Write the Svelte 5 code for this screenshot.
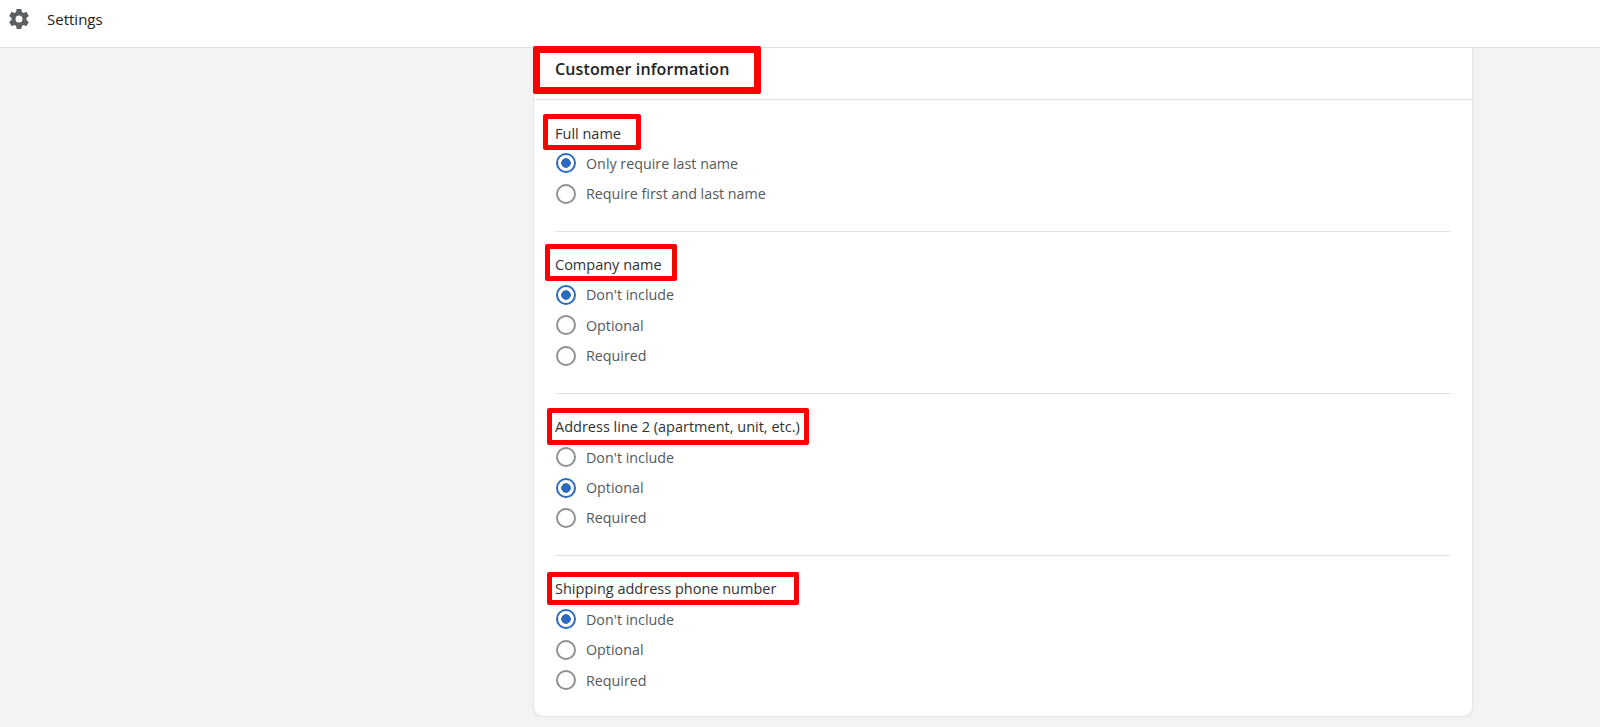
<script>
  const sections = [
    { key: "full", label: "Full name", options: ["Only require last name", "Require first and last name"], selected: 0 },
    { key: "company", label: "Company name", options: ["Don't include", "Optional", "Required"], selected: 0 },
    { key: "address", label: "Address line 2 (apartment, unit, etc.)", options: ["Don't include", "Optional", "Required"], selected: 1 },
    { key: "phone", label: "Shipping address phone number", options: ["Don't include", "Optional", "Required"], selected: 0 },
  ];
</script>

<header class="topbar">
  <svg class="gear" viewBox="0 0 24 24" aria-hidden="true">
    <path d="M19.43 12.98c.04-.32.07-.64.07-.98s-.03-.66-.07-.98l2.11-1.65c.19-.15.24-.42.12-.64l-2-3.46c-.12-.22-.39-.3-.61-.22l-2.49 1c-.52-.4-1.08-.73-1.69-.98l-.38-2.65A.49.49 0 0 0 14 2h-4c-.25 0-.46.18-.49.42l-.38 2.65c-.61.25-1.17.59-1.69.98l-2.49-1c-.23-.09-.49 0-.61.22l-2 3.46c-.13.22-.07.49.12.64l2.11 1.65c-.04.32-.07.65-.07.98s.03.66.07.98l-2.11 1.65c-.19.15-.24.42-.12.64l2 3.46c.12.22.39.3.61.22l2.49-1c.52.4 1.08.73 1.69.98l.38 2.65c.03.24.24.42.49.42h4c.25 0 .46-.18.49-.42l.38-2.65c.61-.25 1.17-.59 1.69-.98l2.49 1c.23.09.49 0 .61-.22l2-3.46c.12-.22.07-.49-.12-.64l-2.11-1.65zM12 15.5a3.5 3.5 0 1 1 0-7 3.5 3.5 0 0 1 0 7z"/>
  </svg>
  <span class="title">Settings</span>
</header>

<main class="page">
  <section class="card">
    <div class="card-head">
      <h2>Customer information</h2>
      <span class="mark mark-head"></span>
    </div>
    <div class="card-body">
      {#each sections as s}
        <div class="group">
          <div class="label">
            {s.label}
            <span class="mark mark-{s.key}"></span>
          </div>
          {#each s.options as opt, i}
            <label class="option">
              <span class="radio" class:on={i === s.selected}></span>
              <span>{opt}</span>
            </label>
          {/each}
        </div>
      {/each}
    </div>
  </section>
</main>

<style>
  :global(body) {
    background: #f3f3f3;
    font-family: "Open Sans", "Noto Sans", sans-serif;
    overflow: hidden;
  }
  .topbar {
    display: flex;
    align-items: center;
    height: 48px;
    padding: 0 0 10px 7px;
    box-sizing: border-box;
    background: #fff;
    border-bottom: 1px solid #dfe0e1;
  }
  .gear {
    width: 24px;
    height: 24px;
    fill: #5c5f62;
  }
  .title {
    margin-left: 16px;
    font-size: 15px;
    color: #202223;
  }
  .page {
    display: grid;
    grid-template-columns: 940px;
    padding-left: 533px;
  }
  .card {
    height: 669px;
    box-sizing: border-box;
    background: #fff;
    border: solid #e6e6e6;
    border-width: 0 1px 1px 1px;
    border-radius: 0 0 10px 10px;
    box-shadow: 0 1px 2px rgba(0, 0, 0, 0.06);
  }
  .card-head {
    position: relative;
    height: 52px;
    box-sizing: border-box;
    padding: 9px 21px 0;
    border-bottom: 1px solid #e1e3e5;
  }
  h2 {
    margin: 0;
    font-size: 16px;
    line-height: 24px;
    font-weight: 600;
    letter-spacing: 0.12px;
    color: #202223;
  }
  .card-body {
    padding: 0 21px;
  }
  .group {
    padding: 23px 0 22px;
    border-bottom: 1px solid #e1e3e5;
  }
  .group:first-child {
    padding-top: 24px;
  }
  .group:first-child .label {
    margin-bottom: 4px;
  }
  .group:last-child {
    border-bottom: 0;
  }
  .label {
    position: relative;
    font-size: 14.5px;
    line-height: 20px;
    color: #303234;
    margin-bottom: 5px;
  }
  .option {
    display: flex;
    align-items: center;
    height: 30.4px;
    font-size: 14.3px;
    color: #55585b;
  }
  .radio {
    flex: none;
    width: 20px;
    height: 20px;
    box-sizing: border-box;
    margin: 0 10px 0 1px;
    border: 2px solid #8c9196;
    border-radius: 50%;
  }
  .radio.on {
    border-color: #2a6bbd;
    background: radial-gradient(circle, #2a6bbd 0 4.5px, #fff 5px);
  }
  /* red annotation boxes drawn over the screenshot */
  .mark {
    position: absolute;
    box-sizing: border-box;
    border: 5px solid #f00;
    border-radius: 2px;
    pointer-events: none;
  }
  .mark-head {
    left: -1px;
    top: -2px;
    width: 228px;
    height: 48px;
    border-width: 7px;
  }
  .mark-full {
    left: -12px;
    top: -10px;
    width: 98px;
    height: 36px;
  }
  .mark-company {
    left: -10px;
    top: -11px;
    width: 132px;
    height: 37px;
  }
  .mark-address {
    left: -8px;
    top: -9px;
    width: 262px;
    height: 37px;
  }
  .mark-phone {
    left: -8px;
    top: -7px;
    width: 252px;
    height: 33px;
  }
</style>
